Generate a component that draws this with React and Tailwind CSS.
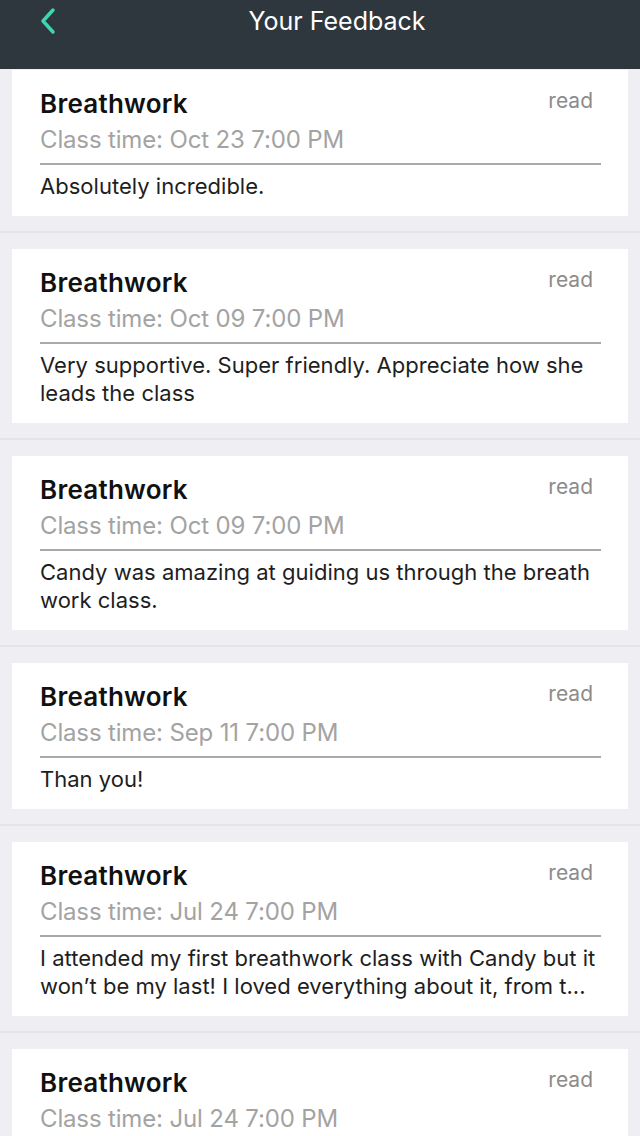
import React from "react";

const items = [
  { time: "Oct 23 7:00 PM", lines: ["Absolutely incredible."] },
  { time: "Oct 09 7:00 PM", lines: ["Very supportive. Super friendly. Appreciate how she", "leads the class"] },
  { time: "Oct 09 7:00 PM", lines: ["Candy was amazing at guiding us through the breath", "work class."] },
  { time: "Sep 11 7:00 PM", lines: ["Than you!"] },
  { time: "Jul 24 7:00 PM", lines: ["I attended my first breathwork class with Candy but it", "won\u2019t be my last! I loved everything about it, from t..."] },
  { time: "Jul 24 7:00 PM", lines: ["Great class."] },
];

function Card({ item }) {
  return (
    <div className="bg-white pl-[28px] pr-[27px] pt-[19px] pb-[16px]">
      <div className="flex items-center justify-between h-[30px]">
        <span className="text-[26px] leading-[30px] font-semibold text-[#111111] tracking-[0.25px]">Breathwork</span>
        <span className="text-[21px] leading-[30px] text-[#8c8c8c] mr-[8px] -mt-[6px]">read</span>
      </div>
      <div className="mt-[6px] text-[24px] leading-[30px] text-[#a3a3a3] tracking-[-0.15px]">Class time: {item.time}</div>
      <div className="mt-[8px] h-[2px] bg-[#a9a9a9]" />
      <div className="mt-[7px] text-[22px] leading-[28px] text-[#1e1e1e] tracking-[0.02px]">
        {item.lines.map((l, i) => (
          <div key={i} className="whitespace-nowrap">{l}</div>
        ))}
      </div>
    </div>
  );
}

export default function App() {
  return (
    <div className="w-[640px] h-[1136px] overflow-hidden bg-[#efeef2]" style={{ fontFamily: "Inter, 'Noto Sans', sans-serif" }}>
      <div className="h-[69px] bg-[#2e373d] relative flex justify-center">
        <button className="absolute left-[36px] top-[6px] w-[24px] h-[30px] flex items-center justify-center">
          <svg width="18" height="28" viewBox="0 0 18 28" fill="none">
            <path d="M14 3 L4 14 L14 25" stroke="#3ed6b2" strokeWidth="3.5" strokeLinecap="round" strokeLinejoin="round" />
          </svg>
        </button>
        <h1 className="mt-[6px] ml-[34px] text-[25px] leading-[30px] text-white font-normal">Your Feedback</h1>
      </div>
      <div>
        {items.map((it, i) => (
          <div key={i} className={`px-[12px] pb-[15px] border-b-[2px] border-[#e4e3e7] ${i === 0 ? "pt-[1px]" : "pt-[16px]"}`}>
            <Card item={it} />
          </div>
        ))}
      </div>
    </div>
  );
}
